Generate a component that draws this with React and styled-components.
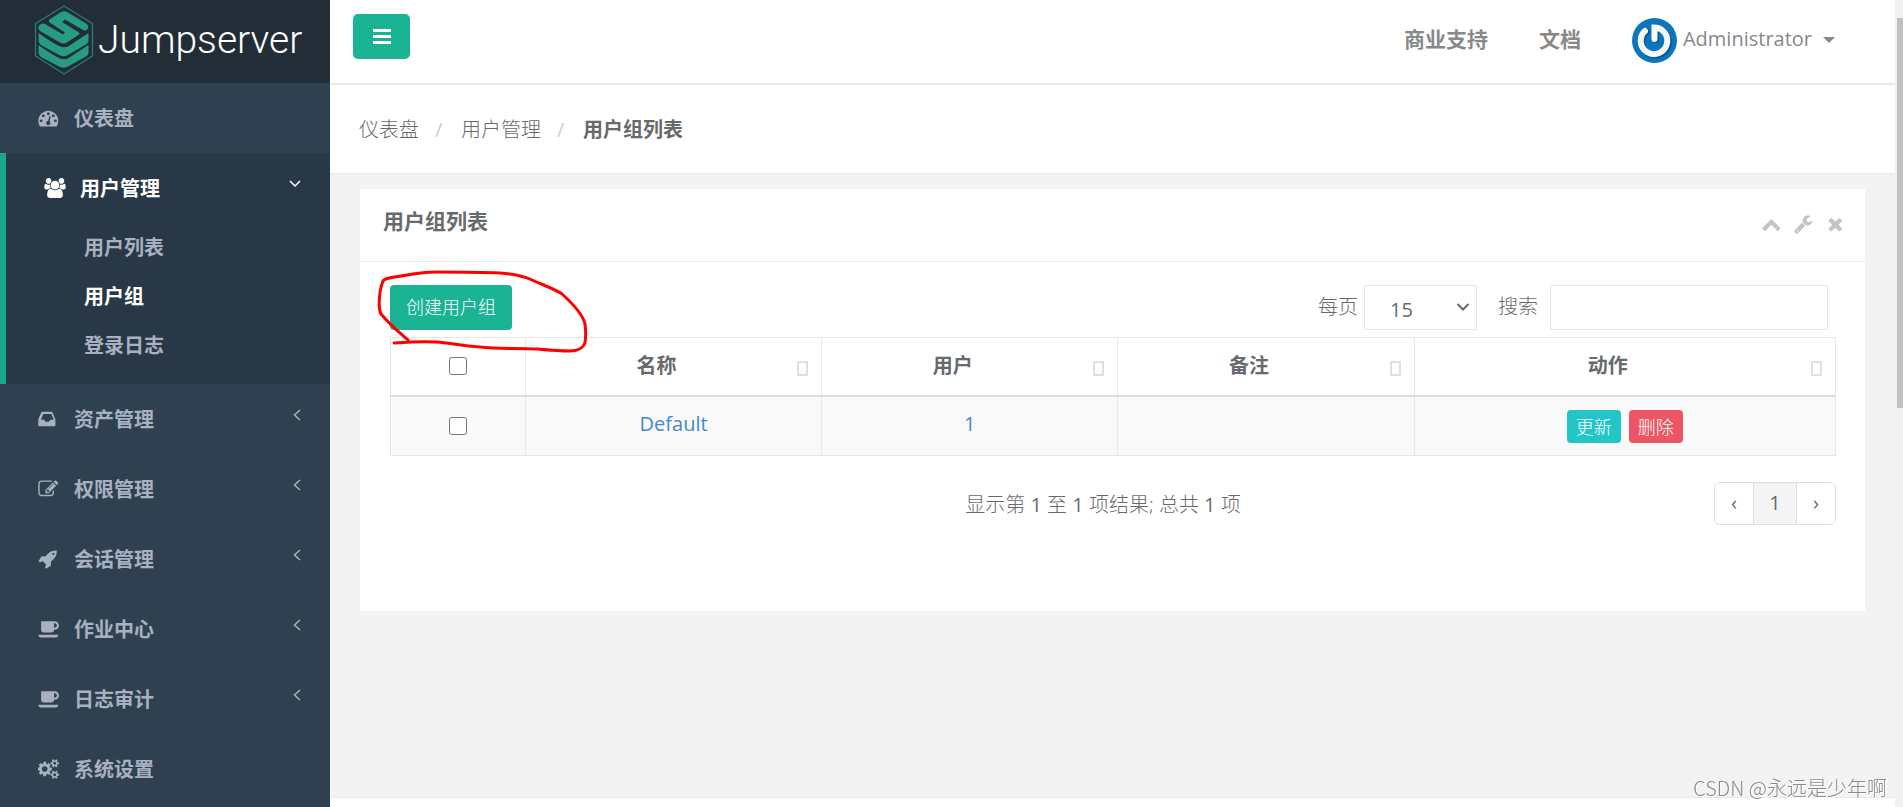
import styled, { createGlobalStyle } from 'styled-components';

const icons = {
  dashboard:
    'M384 1152q0-53-37.5-90.5t-90.5-37.5-90.5 37.5-37.5 90.5 37.5 90.5 90.5 37.5 90.5-37.5 37.5-90.5zm192-448q0-53-37.5-90.5t-90.5-37.5-90.5 37.5-37.5 90.5 37.5 90.5 90.5 37.5 90.5-37.5 37.5-90.5zm428 481l101-382q6-26-7.5-48.5t-38.5-29.5-48 6.5-30 39.5l-101 382q-60 5-107 43.5t-63 98.5q-20 77 20 146t117 89 146-20 89-117q16-60-6-117t-72-91zm660-33q0-53-37.5-90.5t-90.5-37.5-90.5 37.5-37.5 90.5 37.5 90.5 90.5 37.5 90.5-37.5 37.5-90.5zm-640-640q0-53-37.5-90.5t-90.5-37.5-90.5 37.5-37.5 90.5 37.5 90.5 90.5 37.5 90.5-37.5 37.5-90.5zm448 192q0-53-37.5-90.5t-90.5-37.5-90.5 37.5-37.5 90.5 37.5 90.5 90.5 37.5 90.5-37.5 37.5-90.5zm320 448q0 261-141 483-19 29-54 29h-1402q-35 0-54-29-141-221-141-483 0-182 71-348t191-286 286-191 348-71 348 71 286 191 191 286 71 348z',
  users:
    'M593 896q-162 5-265 128h-134q-82 0-138-40.5t-56-118.5q0-353 124-353 6 0 43.5 21t97.5 42.5 119 21.5q67 0 133-23-5 37-5 66 0 139 81 256zm1071 637q0 120-73 189.5t-194 69.5h-874q-121 0-194-69.5t-73-189.5q0-53 3.5-103.5t14-109 26.5-108.5 43-97.5 62-81 85.5-53.5 111.5-20q10 0 43 21.5t73 48 107 48 135 21.5 135-21.5 107-48 73-48 43-21.5q61 0 111.5 20t85.5 53.5 62 81 43 97.5 26.5 108.5 14 109 3.5 103.5zm-1024-1277q0 106-75 181t-181 75-181-75-75-181 75-181 181-75 181 75 75 181zm704 384q0 159-112.5 271.5t-271.5 112.5-271.5-112.5-112.5-271.5 112.5-271.5 271.5-112.5 271.5 112.5 112.5 271.5zm576 225q0 78-56 118.5t-138 40.5h-134q-103-123-265-128 81-117 81-256 0-29-5-66 66 23 133 23 59 0 119-21.5t97.5-42.5 43.5-21q124 0 124 353zm-128-609q0 106-75 181t-181 75-181-75-75-181 75-181 181-75 181 75 75 181z',
  inbox:
    'M1088 960h295q-1-3-2.5-8t-2.5-8l-212-496h-708l-212 496q-1 2-2.5 8t-2.5 8h295l95 192h320zm448 30v482q0 26-19 45t-45 19h-1408q-26 0-45-19t-19-45v-482q0-62 25-123l238-552q10-25 36.5-42t52.5-17h832q26 0 52.5 17t36.5 42l238 552q25 61 25 123z',
  edit:
    'M888 1184l116-116-152-152-116 116v56h96v96h56zm440-720q-16-16-33 1l-350 350q-17 17-1 33t33-1l350-350q17-17 1-33zm80 594v190q0 119-84.5 203.5t-203.5 84.5h-832q-119 0-203.5-84.5t-84.5-203.5v-832q0-119 84.5-203.5t203.5-84.5h832q63 0 117 25 15 7 18 23 3 17-9 29l-49 49q-14 14-32 8-23-6-45-6h-832q-66 0-113 47t-47 113v832q0 66 47 113t113 47h832q66 0 113-47t47-113v-126q0-13 9-22l64-64q15-15 35-7t20 29zm-96-738l288 288-672 672h-288v-288zm444 132l-92 92-288-288 92-92q28-28 68-28t68 28l152 152q28 28 28 68t-28 68z',
  rocket:
    'M1440 448q0-40-28-68t-68-28-68 28-28 68 28 68 68 28 68-28 28-68zm224-288q0 249-75.5 430.5t-253.5 360.5q-81 80-195 176l-20 379q-2 16-16 26l-384 224q-7 4-16 4-12 0-23-9l-64-64q-13-14-8-32l85-276-281-281-276 85q-3 1-9 1-14 0-23-9l-64-64q-17-19-5-39l224-384q10-14 26-16l379-20q96-114 176-195 188-187 358-258t431-71q14 0 24 9.5t10 22.5z',
  coffee:
    'M1664 576q0-80-56-136t-136-56h-64v384h64q80 0 136-56t56-136zm-1664 832h1792q0 106-75 181t-181 75h-1280q-106 0-181-75t-75-181zm1856-832q0 159-112.5 271.5t-271.5 112.5h-64v32q0 92-66 158t-158 66h-704q-92 0-158-66t-66-158v-736q0-26 19-45t45-19h1152q159 0 271.5 112.5t112.5 271.5z',
  cogs:
    'M832 896q0-106-75-181t-181-75-181 75-75 181 75 181 181 75 181-75 75-181zm768 512q0-52-38-90t-90-38-90 38-38 90q0 53 37.5 90.5t90.5 37.5 90.5-37.5 37.5-90.5zm0-1024q0-52-38-90t-90-38-90 38-38 90q0 53 37.5 90.5t90.5 37.5 90.5-37.5 37.5-90.5zm-384 421v185q0 10-7 19.5t-16 10.5l-155 24q-11 35-32 76 34 48 90 115 7 11 7 20 0 12-7 19-23 30-82.5 89.5t-78.5 59.5q-11 0-21-7l-115-90q-37 19-77 31-11 108-23 155-7 24-30 24h-186q-11 0-20-7.5t-10-17.5l-23-153q-34-10-75-31l-118 89q-7 7-20 7-11 0-21-8-144-133-144-160 0-9 7-19 10-14 41-53t47-61q-23-44-35-82l-152-24q-10-1-17-9.5t-7-19.5v-185q0-10 7-19.5t16-10.5l155-24q11-35 32-76-34-48-90-115-7-11-7-20 0-12 7-20 22-30 82-89t79-59q11 0 21 7l115 90q34-18 77-32 11-108 23-154 7-24 30-24h186q11 0 20 7.5t10 17.5l23 153q34 10 75 31l118-89q8-7 20-7 11 0 21 8 144 133 144 160 0 8-7 19-12 16-42 54t-45 60q23 48 34 82l152 23q10 2 17 10.5t7 19.5zm640 533v140q0 16-149 31-12 27-30 52 51 113 51 138 0 4-4 7-122 71-124 71-8 0-46-47t-52-68q-20 2-30 2t-30-2q-14 21-52 68t-46 47q-2 0-124-71-4-3-4-7 0-25 51-138-18-25-30-52-149-15-149-31v-140q0-16 149-31 13-29 30-52-51-113-51-138 0-4 4-7 4-2 35-20t59-34 30-16q8 0 46 46.5t52 67.5q20-2 30-2t30 2q51-71 92-112l6-2q4 0 124 70 4 3 4 7 0 25-51 138 17 23 30 52 149 15 149 31zm0-1024v140q0 16-149 31-12 27-30 52 51 113 51 138 0 4-4 7-122 71-124 71-8 0-46-47t-52-68q-20 2-30 2t-30-2q-14 21-52 68t-46 47q-2 0-124-71-4-3-4-7 0-25 51-138-18-25-30-52-149-15-149-31v-140q0-16 149-31 13-29 30-52-51-113-51-138 0-4 4-7 4-2 35-20t59-34 30-16q8 0 46 46.5t52 67.5q20-2 30-2t30 2q51-71 92-112l6-2q4 0 124 70 4 3 4 7 0 25-51 138 17 23 30 52 149 15 149 31z',
  wrench:
    'M448 1472q0-26-19-45t-45-19-45 19-19 45 19 45 45 19 45-19 19-45zm644-420l-682 682q-37 37-90 37-52 0-91-37l-106-108q-38-36-38-90 0-53 38-91l681-681q39 98 114.5 173.5t173.5 114.5zm634-435q0 39-23 106-47 134-164.5 217.5t-258.5 83.5q-185 0-316.5-131.5t-131.5-316.5 131.5-316.5 316.5-131.5q58 0 121.5 16.5t107.5 46.5q16 11 16 28t-16 28l-293 169v224l193 107q5-3 79-48.5t135.5-81 70.5-35.5q15 0 23.5 10t8.5 25z',
  times:
    'M1490 1322q0 40-28 68l-136 136q-28 28-68 28t-68-28l-294-294-294 294q-28 28-68 28t-68-28l-136-136q-28-28-28-68t28-68l294-294-294-294q-28-28-28-68t28-68l136-136q28-28 68-28t68 28l294 294 294-294q28-28 68-28t68 28l136 136q28 28 28 68t-28 68l-294 294 294 294q28 28 28 68z',
  chevronUp:
    'M1683 1331l-166 165q-19 19-45 19t-45-19l-531-531-531 531q-19 19-45 19t-45-19l-166-165q-19-19-19-45.5t19-45.5l742-741q19-19 45-19t45 19l742 741q19 19 19 45.5t-19 45.5z',
};

const menu = [
  { label: '仪表盘', icon: 'dashboard' },
  {
    label: '用户管理',
    icon: 'users',
    open: true,
    children: ['用户列表', '用户组', '登录日志'],
  },
  { label: '资产管理', icon: 'inbox', arrow: true },
  { label: '权限管理', icon: 'edit', arrow: true },
  { label: '会话管理', icon: 'rocket', arrow: true },
  { label: '作业中心', icon: 'coffee', arrow: true },
  { label: '日志审计', icon: 'coffee', arrow: true },
  { label: '系统设置', icon: 'cogs' },
];

const columns = ['名称', '用户', '备注', '动作'];

const Icon = ({ name }) => (
  <IconSvg viewBox="0 0 1920 1792" aria-hidden="true">
    <path d={icons[name]} />
  </IconSvg>
);

const Logo = () => (
  <LogoSvg width="60" height="70" viewBox="0 0 60 70" aria-hidden="true">
    <path
      d="M30 1L58.500 18.500V51L30 69L1.500 51V18.500Z"
      fill="none"
      stroke="#2b7d70"
      strokeWidth="1.300"
    />
    <g fill="#289c82">
      <path d="M27 7Q30 5.500 33 7L52 18.500Q55 20.500 54 23.500Q52 26.500 49 25L31 14.500L28 17L45 27.500Q46 28.500 45 29.500L33 37.500Q29.500 39.500 26 37.500L6 26Q3.500 23.500 5 20.500Q8 17.500 11 19L29 29.500L31 27.500L15 17Q14 15.500 15.500 14.500Z" />
      <path d="M4.500 28Q16 36.500 26 41.500Q30 43 34 41.500L54.500 28V35.500Q54.500 38 51 40L33 50.500Q29.500 52 26 50.500L7 40Q4.500 38 4.500 35.500Z" />
      <path d="M4.500 40Q16 48.500 26 53.500Q30 55 34 53.500L54.500 40V47.500Q54.500 50 51 52L33 62Q29.500 63.500 26 62L7 52Q4.500 50 4.500 47.500Z" />
    </g>
  </LogoSvg>
);

const Avatar = () => (
  <svg width="45" height="45" viewBox="0 0 45 45" aria-hidden="true">
    <circle cx="22.500" cy="22.500" r="22.500" fill="#0b76bc" />
    <g fill="none" strokeLinecap="round" strokeWidth="6">
      <path d="M14 13A13.300 13.300 0 1 0 23 10V21" stroke="#07578c" transform="translate(1 1)" />
      <path d="M13 13A13.300 13.300 0 1 0 22.500 9.500V21" stroke="#f7f7f7" />
    </g>
  </svg>
);

const Sidebar = () => (
  <Side>
    <Brand href="#">
      <Logo />
      <BrandName>Jumpserver</BrandName>
    </Brand>
    <nav>
      {menu.map(item => (
        <MenuGroup key={item.label} $open={item.open}>
          <MenuLink href="#" $open={item.open}>
            <Icon name={item.icon} />
            <MenuLabel>{item.label}</MenuLabel>
            {item.open && (
              <ArrowSvg width="12" height="8" viewBox="0 0 12 8" aria-hidden="true">
                <path d="M1 1L6 6L11 1" />
              </ArrowSvg>
            )}
            {item.arrow && (
              <ArrowSvg width="8" height="12" viewBox="0 0 8 12" aria-hidden="true">
                <path d="M7 1L1.500 6L7 11" />
              </ArrowSvg>
            )}
          </MenuLink>
          {item.children && (
            <SubMenu>
              {item.children.map(child => (
                <SubLink href="#" key={child} $active={child === '用户组'}>
                  {child}
                </SubLink>
              ))}
            </SubMenu>
          )}
        </MenuGroup>
      ))}
    </nav>
  </Side>
);

const TopBar = () => (
  <Header>
    <ToggleButton type="button" aria-label="菜单">
      <svg width="18" height="15" viewBox="0 0 18 15" fill="#fff" aria-hidden="true">
        <path d="M0 0H18V3H0ZM0 6H18V9H0ZM0 12H18V15H0Z" />
      </svg>
    </ToggleButton>
    <TopLinks>
      <TopLink href="#">商业支持</TopLink>
      <TopLink href="#">文档</TopLink>
      <UserLink href="#">
        <Avatar />
        <UserName>Administrator</UserName>
        <Caret />
      </UserLink>
    </TopLinks>
  </Header>
);

const Breadcrumb = () => (
  <Crumbs>
    <Crumb href="#">仪表盘</Crumb>
    <Slash>/</Slash>
    <Crumb href="#">用户管理</Crumb>
    <Slash>/</Slash>
    <strong>用户组列表</strong>
  </Crumbs>
);

const Toolbar = () => (
  <Tools>
    <CreateButton type="button">创建用户组</CreateButton>
    <Filters>
      <FilterLabel htmlFor="page-size">每页</FilterLabel>
      <SelectBox>
        <Select id="page-size" defaultValue="15">
          <option>15</option>
          <option>25</option>
          <option>50</option>
        </Select>
        <SelectArrow width="14" height="10" viewBox="0 0 14 10" aria-hidden="true">
          <path d="M1.500 2L7 7.500L12.500 2" />
        </SelectArrow>
      </SelectBox>
      <SearchLabel htmlFor="search">搜索</SearchLabel>
      <SearchInput id="search" type="text" />
    </Filters>
    <Scribble width="220" height="90" viewBox="370 265 220 90" aria-hidden="true">
      <path d="M408 340C400 333 391 326 381 314C378 308 379 291 383 281C386 277 398 277 413 274C425 272 432 272 437 272C462 272 480 272 500 273C513 274 523 276 532 280C543 285 555 289 562 294C572 303 583 315 585 324C586 331 586 336 585 343C583 348 577 351 570 351C559 351 548 350 537 349C515 348 498 349 480 347C462 346 450 343 437 342C423 341 408 342 394 343" />
    </Scribble>
  </Tools>
);

const GroupTable = () => (
  <Table>
    <colgroup>
      <Col $width="135px" />
      <Col $width="20.5%" />
      <Col $width="20.5%" />
      <Col $width="20.5%" />
      <Col />
    </colgroup>
    <thead>
      <tr>
        <Th>
          <Checkbox type="checkbox" aria-label="全选" />
        </Th>
        {columns.map(name => (
          <Th key={name}>
            <HeadCell>
              <HeadLabel>{name}</HeadLabel>
              <SortMark />
            </HeadCell>
          </Th>
        ))}
      </tr>
    </thead>
    <tbody>
      <tr>
        <Td>
          <Checkbox type="checkbox" aria-label="Default" />
        </Td>
        <Td>
          <TableLink href="#">Default</TableLink>
        </Td>
        <Td>
          <TableLink href="#">1</TableLink>
        </Td>
        <Td />
        <Td>
          <Actions>
            <SmallButton type="button" $color="#23c6c8">更新</SmallButton>
            <SmallButton type="button" $color="#ed5565">删除</SmallButton>
          </Actions>
        </Td>
      </tr>
    </tbody>
  </Table>
);

const App = () => (
  <Page>
    <GlobalStyle />
    <Sidebar />
    <Main>
      <TopBar />
      <Breadcrumb />
      <Content>
        <Panel>
          <PanelHead>
            <PanelTitle>用户组列表</PanelTitle>
            <PanelTools>
              <ToolButton type="button" aria-label="收起">
                <Icon name="chevronUp" />
              </ToolButton>
              <ToolButton type="button" aria-label="设置">
                <Icon name="wrench" />
              </ToolButton>
              <ToolButton type="button" aria-label="关闭">
                <Icon name="times" />
              </ToolButton>
            </PanelTools>
          </PanelHead>
          <PanelBody>
            <Toolbar />
            <GroupTable />
            <TableFooter>
              <Info>
                显示第 <Count>1</Count> 至 <Count>1</Count> 项结果; 总共 <Count>1</Count> 项
              </Info>
              <Pagination>
                <PageButton type="button">‹</PageButton>
                <PageButton type="button" $current>1</PageButton>
                <PageButton type="button">›</PageButton>
              </Pagination>
            </TableFooter>
          </PanelBody>
        </Panel>
      </Content>
      <Footer />
    </Main>
    <ScrollRail>
      <ScrollThumb />
    </ScrollRail>
    <Watermark>CSDN @永远是少年啊</Watermark>
  </Page>
);

const GlobalStyle = createGlobalStyle`
  * {
    box-sizing: border-box;
  }

  body {
    margin: 0;
    color: #676a6c;
    background-color: #2f4050;
    font-family: 'Open Sans', 'Noto Sans CJK SC', sans-serif;
    font-size: 20px;
    line-height: 30px;
  }

  a {
    color: inherit;
    text-decoration: none;
  }

  button,
  input,
  select {
    color: inherit;
    font: inherit;
  }

  button {
    cursor: pointer;
  }
`;

const Page = styled.div`
  display: flex;
  min-height: 100vh;
`;

const Side = styled.aside`
  flex: none;
  width: 330px;
  color: #a7b1c2;
  background-color: #2f4050;
`;

const Brand = styled.a`
  display: flex;
  align-items: center;
  gap: 4px;
  height: 83px;
  padding: 0 20px 4px 34px;
  color: white;
  background-color: #222d38;
`;

const LogoSvg = styled.svg`
  flex: none;
`;

const BrandName = styled.span`
  font-family: Roboto, sans-serif;
  font-size: 39px;
  font-weight: 300;
  line-height: 60px;
`;

const MenuGroup = styled.div`
  background-color: ${p => (p.$open ? '#293846' : 'transparent')};
  border-left: ${p => (p.$open ? '6px solid #19aa8d' : 'none')};
`;

const MenuLink = styled.a`
  display: flex;
  align-items: center;
  gap: 14px;
  height: 70px;
  padding: 0 29px 0 38px;
  color: ${p => (p.$open ? 'white' : 'inherit')};
  font-weight: 600;
`;

const MenuLabel = styled.span`
  flex: 1;
  padding-top: 2px;
`;

const IconSvg = styled.svg`
  flex: none;
  width: 22px;
  height: 20px;
  fill: currentColor;
`;

const ArrowSvg = styled.svg`
  margin-bottom: 8px;
  fill: none;
  stroke: currentColor;
  stroke-width: 1.5;
`;

const SubMenu = styled.div`
  display: flex;
  flex-direction: column;
  padding-bottom: 14px;
`;

const SubLink = styled.a`
  height: 49px;
  padding-left: 78px;
  color: ${p => (p.$active ? 'white' : 'inherit')};
  font-weight: 600;
  line-height: 49px;
`;

const Main = styled.main`
  display: flex;
  flex: 1;
  flex-direction: column;
  min-width: 0;
  background-color: #f3f3f4;
`;

const Header = styled.header`
  display: flex;
  justify-content: space-between;
  height: 85px;
  padding: 14px 60px 0 23px;
  background-color: white;
  border-bottom: 2px solid #e7eaec;
`;

const ToggleButton = styled.button`
  display: flex;
  align-items: center;
  justify-content: center;
  width: 57px;
  height: 45px;
  padding: 0;
  background-color: #1ab394;
  border: none;
  border-radius: 5px;
`;

const TopLinks = styled.div`
  display: flex;
  align-items: center;
  gap: 51px;
  height: 52px;
  color: #888;
`;

const TopLink = styled.a`
  padding-bottom: 2px;
  font-size: 21px;
  font-weight: 600;
`;

const UserLink = styled.a`
  display: flex;
  align-items: center;
  gap: 6px;
`;

const UserName = styled.span`
  padding-bottom: 2px;
`;

const Caret = styled.span`
  margin-left: 5px;
  border-top: 6px solid #888;
  border-right: 6px solid transparent;
  border-left: 6px solid transparent;
`;

const Crumbs = styled.nav`
  display: flex;
  gap: 16px;
  height: 89px;
  padding: 30px 29px 0;
  background-color: white;
  border-bottom: 1px solid #e7eaec;
`;

const Crumb = styled.a`
  font-weight: 300;
`;

const Slash = styled.span`
  width: 10px;
  color: #ccc;
`;

const Content = styled.div`
  flex: 1;
  padding: 15px 30px 40px;
`;

const Panel = styled.section`
  background-color: white;
`;

const PanelHead = styled.div`
  display: flex;
  justify-content: space-between;
  height: 73px;
  padding: 17px 18px 0 23px;
  border-bottom: 1px solid #e7eaec;
`;

const PanelTitle = styled.h1`
  margin: 0;
  font-size: 21px;
  font-weight: 600;
  line-height: 30px;
`;

const PanelTools = styled.div`
  display: flex;
  align-items: center;
  gap: 10px;
  height: 36px;
`;

const ToolButton = styled.button`
  display: flex;
  padding: 0;
  color: #c4c4c4;
  background: none;
  border: none;
`;

const PanelBody = styled.div`
  padding: 23px 29px 86px 30px;
`;

const Tools = styled.div`
  position: relative;
  display: flex;
  justify-content: space-between;
  margin-bottom: 7px;
`;

const CreateButton = styled.button`
  height: 45px;
  padding: 0 16px 2px;
  color: white;
  background-color: #1ab394;
  border: none;
  border-radius: 4px;
  font-size: 18px;
  font-weight: 300;
`;

const Filters = styled.div`
  display: flex;
  align-items: center;
  gap: 6px;
  padding-right: 8px;
`;

const FilterLabel = styled.label`
  padding-bottom: 2px;
  font-weight: 300;
`;

const SelectBox = styled.div`
  position: relative;
`;

const Select = styled.select`
  display: block;
  width: 113px;
  height: 45px;
  padding: 4px 25px 0;
  background-color: white;
  border: 1px solid #e5e6e7;
  border-radius: 1px;
  appearance: none;
`;

const SelectArrow = styled.svg`
  position: absolute;
  top: 17px;
  right: 7px;
  fill: none;
  stroke: #676a6c;
  stroke-width: 2;
  pointer-events: none;
`;

const SearchLabel = styled(FilterLabel)`
  margin: 0 6px 0 15px;
`;

const SearchInput = styled.input`
  width: 278px;
  height: 45px;
  padding: 0 12px;
  background-color: white;
  border: 1px solid #e5e6e7;
  border-radius: 1px;
`;

const Scribble = styled.svg`
  position: absolute;
  top: -20px;
  left: -20px;
  fill: none;
  stroke: #fe0000;
  stroke-width: 3;
  stroke-linecap: round;
  stroke-linejoin: round;
  pointer-events: none;
`;

const Table = styled.table`
  width: 100%;
  border: 1px solid #e7e7e7;
  border-collapse: collapse;
  table-layout: fixed;
`;

const Col = styled.col`
  width: ${p => p.$width || 'auto'};
`;

const Th = styled.th`
  height: 58px;
  padding: 0;
  border: 1px solid #e7e7e7;
  border-bottom: 2px solid #ddd;
  font-weight: 600;
`;

const HeadCell = styled.div`
  display: flex;
  align-items: center;
  gap: 18px;
  padding: 0 13px 0 8px;
`;

const HeadLabel = styled.span`
  flex: 1;
`;

const SortMark = styled.span`
  width: 11px;
  height: 15px;
  margin-top: 4px;
  border: 2px solid #e0e0e0;
`;

const Td = styled.td`
  height: 60px;
  padding: 0;
  background-color: #f9f9f9;
  border: 1px solid #e7e7e7;
  text-align: center;
`;

const Checkbox = styled.input`
  display: block;
  width: 18px;
  height: 18px;
  margin: 0 auto;
`;

const TableLink = styled.a`
  display: block;
  padding-bottom: 4px;
  color: #428bca;
`;

const Actions = styled.div`
  display: flex;
  justify-content: center;
  gap: 8px;
  padding-top: 2px;
`;

const SmallButton = styled.button`
  height: 33px;
  padding: 0 9px;
  color: white;
  background-color: ${p => p.$color};
  border: none;
  border-radius: 4px;
  font-size: 18px;
  font-weight: 300;
`;

const TableFooter = styled.div`
  display: grid;
  grid-template-columns: 1fr auto 1fr;
  align-items: center;
  margin-top: 26px;
`;

const Info = styled.div`
  grid-column: 2;
  padding: 2px 20px 0 0;
  font-weight: 300;
`;

const Count = styled.span`
  font-weight: 400;
`;

const Pagination = styled.div`
  display: flex;
  justify-self: end;
  overflow: hidden;
  border: 1px solid #ddd;
  border-radius: 6px;
`;

const PageButton = styled.button`
  width: ${p => (p.$current ? '44px' : '38px')};
  height: 41px;
  padding: 0 0 2px;
  background-color: ${p => (p.$current ? '#f4f4f4' : 'white')};
  border: solid #ddd;
  border-width: ${p => (p.$current ? '0 1px' : '0')};
`;

const Footer = styled.footer`
  height: 10px;
  background-color: white;
  border-top: 1px solid #e7eaec;
`;

const ScrollRail = styled.div`
  flex: none;
  width: 8px;
  padding: 18px 0 0 2px;
  background-color: #f1f1f1;
`;

const ScrollThumb = styled.div`
  height: 390px;
  background-color: #c1c1c1;
`;

const Watermark = styled.div`
  position: fixed;
  right: 16px;
  bottom: 4px;
  color: #8a8a8a;
  font-family: 'Noto Sans CJK SC', sans-serif;
  font-weight: 300;
  text-shadow: 1px 1px 0 white;
`;

export default App;
